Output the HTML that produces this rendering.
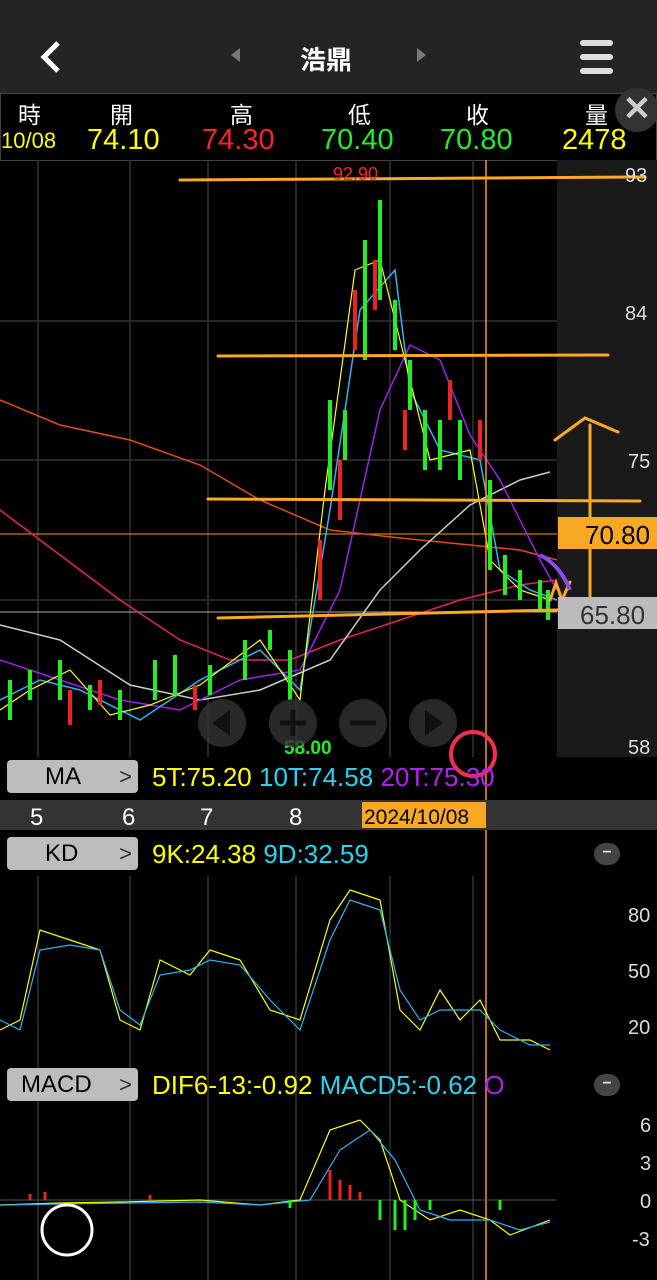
<!DOCTYPE html>
<html><head><meta charset="utf-8"><style>
body{margin:0;width:657px;height:1280px;background:#000;overflow:hidden;font-family:"Liberation Sans","Noto Sans CJK TC",sans-serif;position:relative}
.a{position:absolute}
.btn{position:absolute;left:7px;width:131px;height:33px;background:#bdbdbd;border-radius:4px;color:#000;font-size:24px;line-height:33px}
.btn span{position:absolute;left:38px}
.btn i{position:absolute;right:6px;font-style:normal;color:#333;font-size:22px}
</style></head><body>
<div class="a" style="left:0;top:0;width:657px;height:93px;background:#222426"></div>
<svg class="a" style="left:38px;top:40px" width="26" height="34"><path d="M20 3 L6 17 L20 31" stroke="#fff" stroke-width="5" fill="none"/></svg>
<div class="a" style="left:231px;top:48px;width:0;height:0;border-top:7px solid transparent;border-bottom:7px solid transparent;border-right:9px solid #777"></div>
<div class="a" style="left:300px;top:40px;color:#fff;font-size:26px;font-weight:bold">浩鼎</div>
<div class="a" style="left:417px;top:48px;width:0;height:0;border-top:7px solid transparent;border-bottom:7px solid transparent;border-left:9px solid #777"></div>
<div class="a" style="left:580px;top:40px;width:33px;height:6px;background:#ddd;border-radius:3px"></div>
<div class="a" style="left:580px;top:54px;width:33px;height:6px;background:#ddd;border-radius:3px"></div>
<div class="a" style="left:580px;top:68px;width:33px;height:6px;background:#ddd;border-radius:3px"></div>
<div class="a" style="left:0;top:93px;width:655px;height:66px;border:1px solid #444;background:#000"></div>
<div class="a" style="top:96px;left:0;width:657px;color:#fff;font-size:23px">
<span class="a" style="left:18px">時</span><span class="a" style="left:110px">開</span><span class="a" style="left:230px">高</span><span class="a" style="left:348px">低</span><span class="a" style="left:466px">收</span><span class="a" style="left:585px">量</span></div>
<div class="a" style="top:124px;left:0;width:657px;font-size:29px">
<span class="a" style="left:1px;top:4px;font-size:22px;color:#ff0">10/08</span><span class="a" style="left:87px;color:#ff0">74.10</span><span class="a" style="left:202px;color:#f22">74.30</span><span class="a" style="left:321px;color:#2e2">70.40</span><span class="a" style="left:440px;color:#2e2">70.80</span><span class="a" style="left:562px;color:#ff0">2478</span></div>
<div class="a" style="left:615px;top:88px;width:44px;height:44px;border-radius:22px;background:#333;color:#ccc;font-size:34px;text-align:center;line-height:42px;font-weight:bold">✕</div>

<svg class="a" style="left:0;top:160px" width="657" height="1120">
<rect x="557" y="0" width="100" height="597" fill="#1a1a1a"/>
<g stroke="#333" stroke-width="1.5">
<line x1="38" y1="0" x2="38" y2="597"/><line x1="130" y1="0" x2="130" y2="597"/><line x1="208" y1="0" x2="208" y2="597"/><line x1="296" y1="0" x2="296" y2="597"/><line x1="390" y1="0" x2="390" y2="597"/><line x1="473" y1="0" x2="473" y2="597"/>
<line x1="0" y1="161" x2="557" y2="161"/><line x1="0" y1="300" x2="557" y2="300"/><line x1="0" y1="440" x2="557" y2="440"/>
<line x1="38" y1="716" x2="38" y2="1120"/><line x1="130" y1="716" x2="130" y2="1120"/><line x1="208" y1="716" x2="208" y2="1120"/><line x1="296" y1="716" x2="296" y2="1120"/><line x1="390" y1="716" x2="390" y2="1120"/><line x1="473" y1="716" x2="473" y2="1120"/>
</g>
<line x1="0" y1="374" x2="557" y2="374" stroke="#f90" stroke-width="1"/>
<line x1="0" y1="452" x2="557" y2="452" stroke="#aaa" stroke-width="1"/>
<polyline fill="none" stroke="#e64a19" stroke-width="1.5" points="0,240 60,265 130,280 200,305 260,340 330,370 400,378 470,385 520,390 557,400"/>
<polyline fill="none" stroke="#e91e63" stroke-width="1.5" points="0,350 60,395 120,440 180,480 230,500 290,500 340,480 400,460 460,440 520,425 557,420"/>
<polyline fill="none" stroke="#ccc" stroke-width="1.5" points="0,465 60,480 130,525 200,540 260,530 330,500 380,430 420,390 470,345 520,320 550,312"/>
<polyline fill="none" stroke="#a020f0" stroke-width="1.5" points="0,500 60,520 120,540 180,550 240,520 300,510 340,430 380,250 410,185 440,200 470,275 500,320 540,400 557,430"/>
<polyline fill="none" stroke="#29b6f6" stroke-width="1.5" points="0,540 40,520 80,530 140,560 200,520 260,490 300,530 330,350 360,150 395,110 410,230 440,290 480,300 500,410 530,430 557,440"/>
<polyline fill="none" stroke="#ff0" stroke-width="1.2" points="0,550 30,530 70,510 110,555 150,545 200,525 260,480 300,540 325,330 355,110 380,100 400,180 430,300 470,290 490,400 520,430 550,440"/>
<g stroke-width="4">
<path stroke="#2e2" d="M10 520v40M30 510v30M60 500v40M90 525v25M120 530v30M155 500v40M175 495v40M210 505v30M245 480v40M270 470v20M290 490v50M330 240v90M345 250v50M365 80v120M380 40v100M395 140v50M410 200v50M425 250v60M440 260v50M460 260v60M490 320v90M505 395v40M520 410v30M540 420v30M548 430v30"/>
<path stroke="#e22" d="M70 530v35M100 520v25M195 525v25M320 380v60M340 300v60M355 130v60M375 100v50M405 250v40M450 220v40M480 260v40"/>
</g>
<g stroke="#ffa726" stroke-width="3" stroke-linecap="round" fill="none">
<line x1="180" y1="20" x2="645" y2="17"/><line x1="218" y1="196" x2="608" y2="195"/><line x1="208" y1="339" x2="640" y2="341"/><line x1="218" y1="458" x2="640" y2="448"/>
<path d="M590 445V265M555 280 L585 258 L618 272"/><path d="M550 440 L556 423 L562 440 L570 422"/>
</g>
<path d="M540 395 Q560 405 570 430" stroke="#8a4cf0" stroke-width="4" fill="none"/>
<line x1="486" y1="0" x2="486" y2="1120" stroke="#f90" stroke-width="1.5"/>
<rect x="558" y="357" width="99" height="32" fill="#f9a825"/>
<text x="585" y="384" font-size="26" fill="#000">70.80</text>
<rect x="558" y="437" width="99" height="32" fill="#bbb"/>
<text x="580" y="464" font-size="26" fill="#333">65.80</text>
<g fill="#ddd" font-size="20"><text x="625" y="22">93</text><text x="625" y="160">84</text><text x="628" y="308">75</text><text x="628" y="594">58</text></g>
<text x="333" y="20" font-size="18" fill="#f22">92.90</text>
<text x="284" y="594" font-size="19" fill="#2e2" font-weight="bold">58.00</text>
<g fill="#333" opacity=".8"><circle cx="222" cy="563" r="24"/><circle cx="293" cy="563" r="24"/><circle cx="363" cy="563" r="24"/><circle cx="433" cy="563" r="24"/></g>
<path d="M230 550 L212 563 L230 576Z M425 550 L443 563 L425 576Z" fill="#111"/>
<path d="M280 563h26M293 550v26M350 563h26" stroke="#111" stroke-width="5"/>
<circle cx="473" cy="594" r="22" stroke="#f03050" stroke-width="4" fill="none"/>
<rect x="0" y="640" width="657" height="30" fill="#333"/>
<g fill="#fff" font-size="24"><text x="30" y="665">5</text><text x="122" y="665">6</text><text x="200" y="665">7</text><text x="289" y="665">8</text></g>
<rect x="362" y="642" width="124" height="26" fill="#f9a825"/>
<text x="364" y="664" font-size="21" fill="#000">2024/10/08</text>
<g fill="#ddd" font-size="20"><text x="628" y="762">80</text><text x="628" y="818">50</text><text x="628" y="874">20</text><text x="640" y="972">6</text><text x="640" y="1010">3</text><text x="640" y="1048">0</text><text x="632" y="1086">-3</text></g>
<polyline fill="none" stroke="#ff0" stroke-width="1.2" points="0,870 20,860 40,770 70,780 100,790 120,860 140,870 160,800 190,815 210,790 240,800 270,850 300,860 330,760 350,730 380,740 400,850 420,870 440,830 460,860 480,840 500,880 530,880 550,890"/>
<polyline fill="none" stroke="#29b6f6" stroke-width="1.2" points="0,860 20,870 40,790 70,785 100,790 120,850 140,865 160,815 190,810 210,800 240,805 270,840 300,870 330,780 350,740 380,750 400,830 420,860 440,850 460,850 480,850 500,870 530,885 550,885"/>
<line x1="0" y1="1040" x2="557" y2="1040" stroke="#555"/>
<polyline fill="none" stroke="#ff0" stroke-width="1.2" points="0,1045 60,1043 120,1042 200,1040 260,1045 300,1040 330,970 360,960 380,980 400,1040 430,1060 460,1050 490,1060 510,1075 550,1060"/>
<polyline fill="none" stroke="#29b6f6" stroke-width="1.2" points="0,1045 60,1044 130,1043 200,1042 260,1045 310,1040 340,990 370,970 395,1000 420,1050 450,1060 490,1060 520,1070 550,1062"/>
<g stroke-width="3"><path stroke="#e22" d="M30 1040v-6M45 1040v-8M150 1040v-5M330 1040v-30M340 1040v-20M350 1040v-15M360 1040v-8"/><path stroke="#2e2" d="M290 1040v8M380 1040v20M395 1040v30M405 1040v30M415 1040v20M430 1040v10M500 1040v10"/></g>
<circle cx="67" cy="1070" r="25" stroke="#fff" stroke-width="3" fill="none"/>
</svg>
<div class="btn" style="top:760px"><span>MA</span><i>&gt;</i></div>
<div class="a" style="top:762px;left:152px;font-size:26px;white-space:nowrap"><span style="color:#ff0">5T:75.20</span> <span style="color:#29d3f0">10T:74.58</span> <span style="color:#b020f0">20T:75.30</span></div>
<div class="btn" style="top:837px"><span>KD</span><i>&gt;</i></div>
<div class="a" style="top:839px;left:152px;font-size:26px"><span style="color:#ff0">9K:24.38</span> <span style="color:#29d3f0">9D:32.59</span></div>
<div class="btn" style="top:1068px"><span style="left:14px">MACD</span><i>&gt;</i></div>
<div class="a" style="top:1070px;left:152px;font-size:26px;white-space:nowrap"><span style="color:#ff0">DIF6-13:-0.92</span> <span style="color:#29d3f0">MACD5:-0.62</span> <span style="color:#b020f0">O</span></div>
<div class="a" style="left:594px;top:843px;width:26px;height:22px;border-radius:12px;background:#444;color:#ddd;text-align:center;line-height:20px;font-weight:bold">−</div>
<div class="a" style="left:594px;top:1074px;width:26px;height:22px;border-radius:12px;background:#444;color:#ddd;text-align:center;line-height:20px;font-weight:bold">−</div>
</body></html>
